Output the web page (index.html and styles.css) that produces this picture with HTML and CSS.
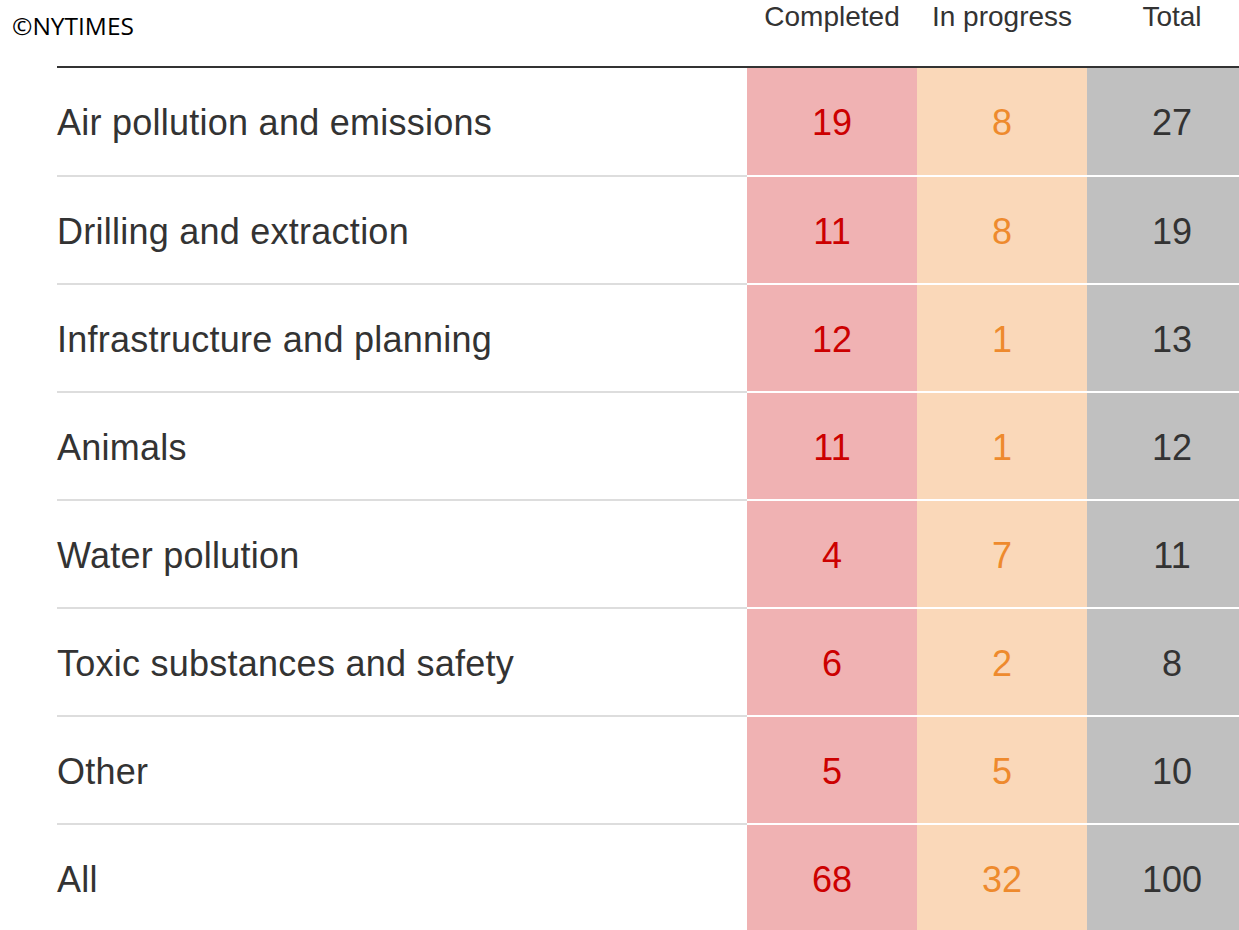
FILE: index.html
```html
<!DOCTYPE html>
<html>
<head>
<meta charset="utf-8">
<link rel="stylesheet" href="styles.css">
</head>
<body>
<div class="page">
  <div class="head">
    <div class="credit">©NYTIMES</div>
    <div class="hcell">Completed</div>
    <div class="hcell">In progress</div>
    <div class="hcell">Total</div>
  </div>
  <div class="table">
    <div class="row first"><div class="label">Air pollution and emissions</div><div class="num c">19</div><div class="num p">8</div><div class="num t">27</div></div>
    <div class="row"><div class="label">Drilling and extraction</div><div class="num c">11</div><div class="num p">8</div><div class="num t">19</div></div>
    <div class="row"><div class="label">Infrastructure and planning</div><div class="num c">12</div><div class="num p">1</div><div class="num t">13</div></div>
    <div class="row"><div class="label">Animals</div><div class="num c">11</div><div class="num p">1</div><div class="num t">12</div></div>
    <div class="row"><div class="label">Water pollution</div><div class="num c">4</div><div class="num p">7</div><div class="num t">11</div></div>
    <div class="row"><div class="label">Toxic substances and safety</div><div class="num c">6</div><div class="num p">2</div><div class="num t">8</div></div>
    <div class="row"><div class="label">Other</div><div class="num c">5</div><div class="num p">5</div><div class="num t">10</div></div>
    <div class="row last"><div class="label">All</div><div class="num c">68</div><div class="num p">32</div><div class="num t">100</div></div>
  </div>
</div>
</body>
</html>
```
FILE: styles.css
```css
html, body {
  margin: 0;
  padding: 0;
  background: #fff;
  overflow: hidden;
}
.page {
  width: 1239px;
  height: 930px;
  overflow: hidden;
  font-family: "Liberation Sans", Arial, sans-serif;
  color: #333;
}
.head {
  display: grid;
  grid-template-columns: 747px 170px 170px 170px;
  height: 66px;
}
.credit {
  font-family: "Open Sans", sans-serif;
  font-size: 24.5px;
  line-height: 24px;
  color: #000;
  padding-top: 14px;
  padding-left: 12px;
}
.hcell {
  font-size: 28px;
  line-height: 28px;
  padding-top: 3px;
  text-align: center;
  color: #333;
}
.table {
  margin-left: 57px;
  width: 1200px;
  border-top: 2px solid #333;
}
.row {
  display: grid;
  grid-template-columns: 690px 170px 170px 170px;
  height: 108px;
  box-sizing: border-box;
}
.row.first {
  height: 107px;
}
.label, .num {
  display: flex;
  align-items: center;
  font-size: 36px;
  box-sizing: border-box;
  border-top: 2px solid #fff;
  padding-top: 3px;
}
.label {
  border-top-color: #ddd;
  color: #333;
  letter-spacing: 0.25px;
}
.row.first .label, .row.first .num {
  border-top: none;
}
.num {
  justify-content: center;
}
.c {
  background: #f0b2b3;
  color: #cc0000;
}
.p {
  background: #fad8b9;
  color: #ee8a2d;
}
.t {
  background: #c0c0c0;
  color: #333;
}
```
